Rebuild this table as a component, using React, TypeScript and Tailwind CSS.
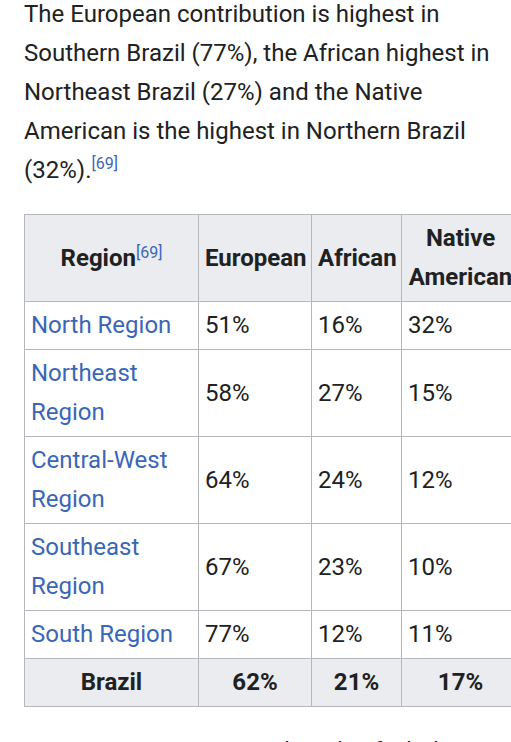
import React from "react";

const rows: { name: string[]; e: string; a: string; n: string }[] = [
  { name: ["North Region"], e: "51%", a: "16%", n: "32%" },
  { name: ["Northeast", "Region"], e: "58%", a: "27%", n: "15%" },
  { name: ["Central-West", "Region"], e: "64%", a: "24%", n: "12%" },
  { name: ["Southeast", "Region"], e: "67%", a: "23%", n: "10%" },
  { name: ["South Region"], e: "77%", a: "12%", n: "11%" },
];

const cell = "border border-[#b4b8bd] px-[6px] py-[4px] align-middle";

export default function App() {
  return (
    <div
      className="w-[511px] h-[742px] overflow-hidden bg-white text-[#202122]"
      style={{ fontFamily: "Roboto, 'Noto Sans', sans-serif" }}
    >
      <div className="pl-[24px] mt-[-5px]">
        <p className="text-[24px] leading-[39px] pr-[10px]">
          The European contribution is highest in Southern Brazil (77%), the African highest in Northeast Brazil
          (27%) and the Native American is the highest in Northern Brazil (32%).
          <sup className="text-[16px] leading-none text-[#3a66b8] relative top-[-9px] align-baseline">[69]</sup>
        </p>
        <table className="mt-[24px] border-collapse table-fixed w-[495px] text-[24px] leading-[39px]">
          <colgroup>
            <col className="w-[174px]" />
            <col className="w-[113px]" />
            <col className="w-[90px]" />
            <col className="w-[118px]" />
          </colgroup>
          <thead>
            <tr className="bg-[#eaecf0]">
              <th className={`${cell} font-bold text-center`}>
                Region
                <sup className="text-[16px] leading-none font-normal text-[#3a66b8] relative top-[-8px] align-baseline">
                  [69]
                </sup>
              </th>
              <th className={`${cell} font-bold text-center whitespace-nowrap`}>European</th>
              <th className={`${cell} font-bold text-center whitespace-nowrap`}>African</th>
              <th className={`${cell} font-bold text-center whitespace-nowrap`}>
                Native
                <br />
                American
              </th>
            </tr>
          </thead>
          <tbody>
            {rows.map((r) => (
              <tr key={r.e}>
                <td className={`${cell} text-[#3a66b8]`}>
                  {r.name.map((l, i) => (
                    <div key={i} className="whitespace-nowrap">
                      {l}
                    </div>
                  ))}
                </td>
                <td className={cell}>{r.e}</td>
                <td className={cell}>{r.a}</td>
                <td className={cell}>{r.n}</td>
              </tr>
            ))}
            <tr className="bg-[#eaecf0] font-bold">
              <th className={`${cell} text-center`}>Brazil</th>
              <th className={`${cell} text-center`}>62%</th>
              <th className={`${cell} text-center`}>21%</th>
              <th className={`${cell} text-center`}>17%</th>
            </tr>
          </tbody>
        </table>
        <p className="mt-[25px] text-[24px] leading-[39px] pr-[10px] pl-[120px] whitespace-nowrap">
          an autosomal study of whole Brazil the
        </p>
      </div>
    </div>
  );
}
